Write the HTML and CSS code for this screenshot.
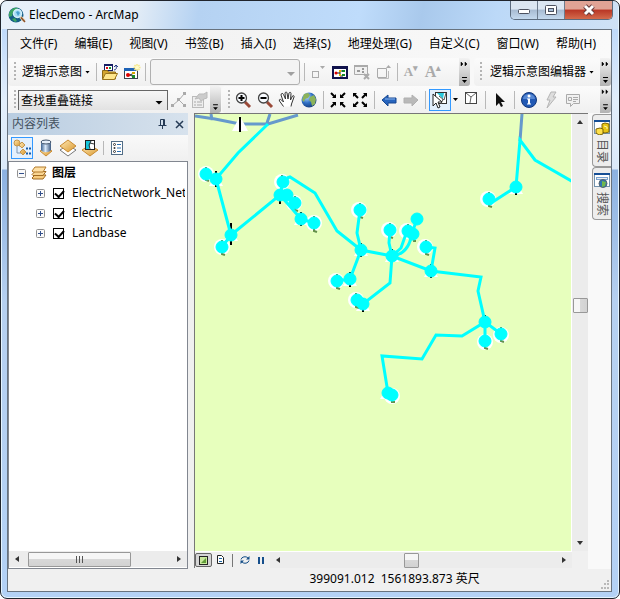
FILE: index.html
```html
<!DOCTYPE html>
<html lang="zh-CN">
<head>
<meta charset="utf-8">
<title>ElecDemo - ArcMap</title>
<link rel="stylesheet" href="styles.css">
</head>
<body>
<svg class="defs" aria-hidden="true">
  <defs>
    <linearGradient id="gold" x1="0" y1="0" x2="1" y2="1"><stop offset="0" stop-color="#ffe9b5"/><stop offset="1" stop-color="#d9982f"/></linearGradient>
    <linearGradient id="steel" x1="0" x2="1"><stop offset="0" stop-color="#3c6290"/><stop offset=".45" stop-color="#d8e8fa"/><stop offset="1" stop-color="#3c5980"/></linearGradient>
    <radialGradient id="ball" cx=".35" cy=".3" r=".8"><stop offset="0" stop-color="#b8dcff"/><stop offset=".5" stop-color="#2f6fc4"/><stop offset="1" stop-color="#123574"/></radialGradient>
    <symbol id="expand" viewBox="0 0 9 9"><rect x=".5" y=".5" width="8" height="8" rx="1" fill="#fafafa" stroke="#919191"/><path d="M2 4.500h5M4.500 2v5" stroke="#33508c"/></symbol>
    <symbol id="overflow" viewBox="0 0 10 28"><path d="M2 4l2 2-2 2zM6 4l2 2-2 2z" fill="#000" stroke="#000" stroke-width=".5"/><path d="M3 19h5v1H3zM3 22h5L5.500 25z" fill="#000"/></symbol>
  </defs>
</svg>
<div class="window">
  <header class="titlebar">
    <svg class="logo" viewBox="0 0 18 18"><circle cx="8" cy="9" r="7.500" fill="#155f86"/><path d="M1 7c2-4 5-6 9-5l-2 3-3 1-1 4-3 1zM4 13l3-1 2 3-2 1z" fill="#3ba563"/><circle cx="9.500" cy="7.500" r="4" fill="#a5ddf6" stroke="#d5effa" stroke-width="1.500"/><path d="M8 6l2-1 2 2-2 3z" fill="#4aa0d0"/><path d="M12.500 11l4 4" stroke="#e9d5b3" stroke-width="3"/><path d="M13 11.500l4 4.500" stroke="#8b4f26" stroke-width="1.500"/></svg>
    <h1>ElecDemo - ArcMap</h1>
    <div class="caption">
      <button class="min" aria-label="最小化"><svg width="14" height="12"><rect x="1.500" y="5.500" width="11" height="4" rx="1" fill="#fff" stroke="#4d5260"/></svg></button>
      <button class="max" aria-label="最大化"><svg width="14" height="12"><rect x="1.500" y="1.500" width="11" height="9" rx="1" fill="#fff" stroke="#4d5260"/><rect x="4.500" y="4.500" width="5" height="3" fill="#a8bfd8" stroke="#4d5260"/></svg></button>
      <button class="close" aria-label="关闭"><svg width="14" height="12"><path d="M3 2l8 8M11 2l-8 8" stroke="#643a3a" stroke-width="5"/><path d="M3 2l8 8M11 2l-8 8" stroke="#fff" stroke-width="3"/></svg></button>
    </div>
  </header>
  <main class="client">
    <nav class="menu">
      <button>文件(F)</button><button>编辑(E)</button><button>视图(V)</button><button>书签(B)</button><button>插入(I)</button><button>选择(S)</button><button>地理处理(G)</button><button>自定义(C)</button><button>窗口(W)</button><button>帮助(H)</button>
    </nav>

    <div class="bars">
      <div class="bar bar-schematic">
        <i class="grip"></i>
        <button class="label">逻辑示意图<i class="caret"></i></button>
        <i class="sep"></i>
        <button class="tool" aria-label="打开示意图"><svg viewBox="0 0 18 18"><rect x="3.500" y="1.500" width="8" height="6" fill="#fff" stroke="#161e63"/><path d="M3 1h9v2H3z" fill="#161e63"/><path d="M5 4h2v2H5z" fill="#e01010"/><path d="M8 4h2v2H8z" fill="#169a30"/><path d="M13 7c2 0 3-2 2-4M13 4l2-2 2 2" stroke="#263c86" fill="none"/><path d="M1.500 16V7.500h5l1 1.500h7v7z" fill="#d4a52e" stroke="#8d6a15"/><path d="M1.500 16.500l3-6h12l-3 6z" fill="#ffe68b" stroke="#9a751c"/></svg></button>
        <button class="tool" aria-label="新建示意图"><svg viewBox="0 0 18 18"><rect x="1.500" y="5.500" width="13" height="10" fill="#fff" stroke="#39434f"/><path d="M1 5h14v3H1z" fill="#1d62b7"/><path d="M4 12h3l4-2M7 12l4 2" stroke="#222" fill="none"/><circle cx="5" cy="12" r="2" fill="#d00"/><rect x="9" y="9" width="3" height="2" fill="#d4a600"/><rect x="9" y="12" width="3" height="3" fill="#188a28"/><path d="M14 1v7M10.500 4.500h7M11.500 2l5 5M16.500 2l-5 5" stroke="#f6e88a" stroke-width="1.500"/><circle cx="14" cy="4.500" r="2" fill="#fffbc8"/></svg></button>
        <i class="sep"></i>
        <span class="combo combo-empty"><select aria-label="示意图" disabled><option></option></select><i class="caret"></i></span>
        <i class="sep"></i>
        <button class="tool" aria-label="缩小节点"><svg viewBox="0 0 18 18"><rect x="3.500" y="8.500" width="6" height="6" fill="none" stroke="#aaa"/><path d="M11 3h5l-2.500 3z" fill="#aaa"/></svg></button>
        <button class="tool" aria-label="示意图窗口"><svg viewBox="0 0 18 18"><rect x="2" y="4" width="14" height="11" fill="#fff" stroke="#10124c" stroke-width="2"/><path d="M1 3h16v3H1z" fill="#10124c"/><path d="M6 10h3M9 8v5h3M9 8h3" stroke="#222" fill="none"/><circle cx="5" cy="10" r="1.500" fill="#d00"/><path d="M8 7h2v2H8zM8 11h2v2H8z" fill="#dfb600"/><path d="M11 7h3v2h-3zM11 11h3v2h-3z" fill="#118a27"/></svg></button>
        <button class="tool" aria-label="删除示意图"><svg viewBox="0 0 18 18"><path d="M1.500 2.500h13v9h-13z" fill="#f0f0f0" stroke="#aaa"/><path d="M1 2h14v2H1z" fill="#aaa"/><path d="M4 7h3v2H4zM9 5h2v2H9zM9 8h2v2H9z" fill="#999"/><path d="M11 11l5 5M16 11l-5 5" stroke="#aaa" stroke-width="2"/></svg></button>
        <button class="tool" aria-label="放大节点"><svg viewBox="0 0 18 18"><path d="M2.500 5.500h9v9h-9z" fill="none" stroke="#aaa"/><path d="M11 5h5l-2.500-3z" fill="#aaa"/><path d="M3 15.500h10.500V8" fill="none" stroke="#bbb"/></svg></button>
        <i class="sep"></i>
        <button class="tool letter small" aria-label="减小字号">A<sup>▾</sup></button>
        <button class="tool letter" aria-label="增大字号">A<sup>▴</sup></button>
        <button class="more" aria-label="工具栏选项"><svg><use href="#overflow"/></svg></button>
      </div>
      <div class="bar bar-editor">
        <i class="grip"></i>
        <button class="label">逻辑示意图编辑器<i class="caret"></i></button>
        <button class="more" aria-label="工具栏选项"><svg><use href="#overflow"/></svg></button>
      </div>
    </div>

    <div class="bars bars-tools">
      <div class="bar bar-links">
        <i class="grip"></i>
        <span class="combo combo-links"><select aria-label="算法"><option>查找重叠链接</option></select><i class="caret"></i></span>
        <button class="tool" aria-label="编辑链接"><svg viewBox="0 0 18 18"><path d="M3 14l6-5 5-6M9 9l5 5" fill="none" stroke="#aaa"/><path d="M1 13h3v3H1zM7 7h3v3H7zM13 1h3v3h-3zM13 13h3v3h-3z" fill="#aaa"/></svg></button>
        <button class="tool" aria-label="属性"><svg viewBox="0 0 18 18"><rect x="2.500" y="5.500" width="11" height="11" fill="#eee" stroke="#bbb"/><path d="M4 11h2M7 11h5M4 14h2M7 14h5" stroke="#aaa"/><path d="M5 8l4-5h5l3-2v6l-3 1-3 2-2-3z" fill="#ccc" stroke="#bbb"/></svg></button>
        <button class="more" aria-label="工具栏选项"><svg viewBox="0 0 10 28"><path d="M3 19h5v1H3zM3 22h5L5.500 25z"/></svg></button>
      </div>
      <div class="bar bar-map">
        <i class="grip"></i>
        <button class="tool" aria-label="放大"><svg viewBox="0 0 18 18"><path d="M11 11l5 5" stroke="#9a4938" stroke-width="3"/><circle cx="7.500" cy="7" r="5" fill="#f8fbff" stroke="#444" stroke-width="1.300"/><path d="M4.500 7h6M7.500 4v6" stroke="#000" stroke-width="2"/></svg></button>
        <button class="tool" aria-label="缩小"><svg viewBox="0 0 18 18"><path d="M11 11l5 5" stroke="#9a4938" stroke-width="3"/><circle cx="7.500" cy="7" r="5" fill="#f8fbff" stroke="#444" stroke-width="1.300"/><path d="M4.500 7h6" stroke="#000" stroke-width="2"/></svg></button>
        <button class="tool" aria-label="平移"><svg viewBox="0 0 18 18"><path d="M5.500 15.500L1.500 10c-1-2 1-2 2-1l2 2L3 4c0-2 2-2 2.500-.5L7.500 8l-.5-6c.5-1.500 2-1 2 0l1 6 1-6c.5-1 2-1 2 .5L12.500 9l2-4c1-1 2 0 1.500 1l-2.500 7-.5 2.500" fill="#fff" stroke="#333"/></svg></button>
        <button class="tool" aria-label="全图"><svg viewBox="0 0 18 18"><circle cx="9" cy="9" r="7.500" fill="url(#ball)"/><path d="M4 3l4-1 2 2-2 3-3 1-1 3-2-2zM10 6l4-2 2 4-1 5-3 2-1-4-2-2z" fill="#8cb35a"/></svg></button>
        <i class="sep"></i>
        <button class="tool" aria-label="固定比例放大"><svg viewBox="0 0 18 18"><path d="M2 2l4 4M16 2l-4 4M2 16l4-4M16 16l-4-4" stroke="#000" stroke-width="2"/><path d="M7 3v4H3zM11 3v4h4zM7 15v-4H3zM11 15v-4h4z"/></svg></button>
        <button class="tool" aria-label="固定比例缩小"><svg viewBox="0 0 18 18"><path d="M3 3l4 4M15 3l-4 4M3 15l4-4M15 15l-4-4" stroke="#000" stroke-width="2"/><path d="M2 6V2h4zM16 6V2h-4zM2 12v4h4zM16 12v4h-4z"/></svg></button>
        <i class="sep"></i>
        <button class="tool" aria-label="上一视图"><svg viewBox="0 0 18 18"><path d="M2 9l6-5v3h8v5H8v3z" fill="#2765be" stroke="#164790"/><path d="M5 8h10" stroke="#8eb8ed"/></svg></button>
        <button class="tool" aria-label="下一视图"><svg viewBox="0 0 18 18"><path d="M16 9l-6-5v3H2v5h8v3z" fill="#b9b9b9" stroke="#b0b0b0"/></svg></button>
        <i class="sep"></i>
        <button class="tool active" aria-label="选择要素"><svg viewBox="0 0 18 18"><rect x="4.500" y="1.500" width="11" height="11" fill="#fff" stroke="#333"/><path d="M6 2h7l-1 6z" fill="#29c7dc"/><path d="M8 5l5 4 2-7M12 8l-2 5" fill="none" stroke="#555"/><path d="M2 3v12l3-3 2 5 2-1-2-5h4z" fill="#fff" stroke="#222"/></svg></button>
        <i class="caret"></i>
        <button class="tool" aria-label="清除选择"><svg viewBox="0 0 18 18"><rect x="3.500" y="1.500" width="11" height="11" fill="#fff" stroke="#444"/><path d="M4 2l5 4 5-4M9 6l-1 6" fill="none" stroke="#666"/></svg></button>
        <i class="sep"></i>
        <button class="tool" aria-label="选择元素"><svg viewBox="0 0 18 18"><path d="M5 2v13l3-3 2 4 2-1-2-4h4z" fill="#111"/></svg></button>
        <i class="sep"></i>
        <button class="tool" aria-label="识别"><svg viewBox="0 0 18 18"><circle cx="9" cy="9" r="7.500" fill="#2259b4" stroke="#13377a"/><path d="M3 8a6 5 0 0 1 12 0z" fill="#6c9be0" opacity=".7"/><circle cx="9" cy="5" r="1.500" fill="#fff"/><path d="M7 7.500h3v5h1v1H7v-1h1v-4H7z" fill="#fff"/></svg></button>
        <button class="tool" aria-label="超链接"><svg viewBox="0 0 18 18"><path d="M9 1h5l-3 5h3l-9 11 3-8H5z" fill="#ddd" stroke="#b5b5b5"/></svg></button>
        <button class="tool" aria-label="HTML 弹出窗口"><svg viewBox="0 0 18 18"><path d="M2.500 3.500h13v9h-6l-3 3v-3h-4z" fill="#f1f1f1" stroke="#aaa"/><path d="M4.500 6.500h3v3h-3zM9 6.500h5M9 8.500h5M9 10.500h3" fill="none" stroke="#aaa"/></svg></button>
        <button class="more" aria-label="工具栏选项"><svg><use href="#overflow"/></svg></button>
      </div>
    </div>

    <div class="workspace">
      <aside class="toc">
        <div class="toc-head"><h2>内容列表</h2>
          <button aria-label="自动隐藏"><svg width="9" height="10"><path d="M2.500 6V.5h4V6M5.500 1v5M.5 6.500h8M4.500 7v3" fill="none" stroke="#263b56"/></svg></button>
          <button aria-label="关闭"><svg width="9" height="9"><path d="M1 1l7 7M8 1L1 8" stroke="#263b56" stroke-width="1.500"/></svg></button>
        </div>
        <div class="toc-tools">
          <button class="tool active" aria-label="按绘制顺序列出"><svg viewBox="0 0 18 18"><path d="M4 7v7h4M6 7h2" fill="none" stroke="#7c96b3"/><circle cx="4" cy="4" r="3" fill="url(#gold)" stroke="#c5964b"/><path d="M9 3l3 3-3 3-3-3zM10 10l3 3-3 3-3-3z" fill="url(#gold)" stroke="#c5964b"/><path d="M13 9.500h2M16 9.500h2M13 14.500h2M16 14.500h2" stroke="#185ca8" stroke-width="2"/></svg></button>
          <button class="tool" aria-label="按源列出"><svg viewBox="0 0 18 18"><path d="M3 12l6-3 6 3-6 5z" fill="url(#gold)" stroke="#c98b32"/><path d="M4 3v8c2 3 8 3 10 0V3z" fill="url(#steel)"/><ellipse cx="9" cy="3" rx="5" ry="2" fill="#e6effa" stroke="#40536b"/></svg></button>
          <button class="tool" aria-label="按可见性列出"><svg viewBox="0 0 18 18"><path d="M1 11l8-5 8 5-8 6z" fill="#fff" stroke="#777"/><path d="M1 7l8-6 8 6-8 6z" fill="url(#gold)" stroke="#c98b32"/></svg></button>
          <button class="tool" aria-label="按选择列出"><svg viewBox="0 0 18 18"><path d="M1 11l8-5 8 5-8 6z" fill="url(#gold)" stroke="#c98b32"/><rect x="4.500" y="1.500" width="9" height="9" fill="#fff" stroke="#222"/><path d="M5 2h5L8 10H5z" fill="#16c6dc"/><path d="M10 2L8 6l1 4M9 4l4 1" fill="none" stroke="#333"/></svg></button>
          <i class="sep"></i>
          <button class="tool" aria-label="选项"><svg viewBox="0 0 18 18"><rect x="3.500" y="2.500" width="11" height="13" fill="#fff" stroke="#526d86"/><circle cx="6.500" cy="5.500" r="1" fill="none" stroke="#333"/><circle cx="6.500" cy="9" r="1" fill="#333"/><circle cx="6.500" cy="12.500" r="1" fill="none" stroke="#333"/><path d="M9 5.500h4M9 9h4M9 12.500h4" stroke="#2c6faf"/></svg></button>
        </div>
        <div class="tree">
          <ul>
            <li class="root"><svg class="box" viewBox="0 0 9 9"><rect x=".5" y=".5" width="8" height="8" rx="1" fill="#fafafa" stroke="#919191"/><path d="M2 4.500h5" stroke="#33508c"/></svg><svg class="layers" viewBox="0 0 16 14"><path d="M1 12l3-3h11l-3 4H2z" fill="#f7cb7d" stroke="#a06a20"/><path d="M1 8.500l3-3h11l-3 4H2z" fill="#f9d591" stroke="#a06a20"/><path d="M1 5l3-4h11l-3 5H2z" fill="#ffe0a4" stroke="#b27a2c"/></svg><strong>图层</strong></li>
            <li><svg class="box"><use href="#expand"/></svg><input type="checkbox" id="l1" checked><label for="l1">ElectricNetwork_Net</label></li>
            <li><svg class="box"><use href="#expand"/></svg><input type="checkbox" id="l2" checked><label for="l2">Electric</label></li>
            <li><svg class="box"><use href="#expand"/></svg><input type="checkbox" id="l3" checked><label for="l3">Landbase</label></li>
          </ul>
          <div class="scroll-h"><button class="arrow left" aria-label="向左"></button><span class="thumb toc-thumb"><i></i><i></i><i></i></span><button class="arrow right" aria-label="向右"></button></div>
        </div>
      </aside>

      <section class="view">
        <div class="map">
          <svg role="img" aria-label="电力网络地图">
            <g transform="translate(-195 -114)">
              <g class="river"><path d="M195 116l20 3 25 5h28l30-9M267 123l3-9M211 114l1 6M522 114l-2 27"/></g>
              <g class="halo">
                <circle cx="206" cy="174" r="8"/><circle cx="222" cy="247" r="8"/><circle cx="282" cy="182" r="8"/><circle cx="294" cy="203" r="8"/><circle cx="314" cy="223" r="8"/><circle cx="359" cy="210" r="8"/><circle cx="336" cy="281" r="8"/><circle cx="356" cy="300" r="8"/><circle cx="389" cy="230" r="8"/><circle cx="407" cy="231" r="8"/><circle cx="425" cy="247" r="8"/><circle cx="485" cy="342" r="8"/><circle cx="501" cy="335" r="8"/><circle cx="392" cy="396" r="8"/><circle cx="488" cy="199" r="8"/>
                <path d="M240 116l8 15h-16zM216 174l7 12h-14zM231 228l7 13h-14zM301 212l7 13h-14zM361 243l7 13h-14zM350 273l7 13h-14zM363 298l7 13h-14zM392 249l7 13h-14zM431 264l7 13h-14zM516 181l7 13h-14zM387 387l7 12h-14z"/>
              </g>
              <path class="mast" d="M240 117v15M216 171v16M231 223v22M280 190v14M301 212v14M361 243v14M350 272v15M363 298v14M392 249v14M431 264v14M485 315v14M516 180v15"/>
              <g class="leaf"><path d="M206 167v13l3 1M222 240v14l3 1M282 175v8M295 196v14l3 1M314 216v15l3 1M360 203v14l3 1M337 274v14l3 1M356 293v14l3 1M390 223v14l3 1M408 224v10M412 233l2 8h2M426 240v14l3 1M485 334v14l3 1M501 327v14l3 1M391 388l1 14h3M489 192v14l3 1"/></g>
              <path class="wire" d="M206 174l10 5 22-26 30-29M216 179l15 56-9 12M231 235l49-40 3-13M287 178l3-1 25 16 22 38 24 19 31 6 39 15 50 6-3 14 7 31 16 12M280 195l21 24 13 4M360 210l-3 23 4 17-11 29-13 2M390 230l-1 13 3 13-2 27-27 21-6-4M392 256l9-8 6-17M392 256q17-2 20-23l5-14M426 247l9 1-4 23M485 341v-19l-23 14-26-1-14 24-40-3 6 37 5 2M489 199l2 4 25-16 4-47 15 20 38 22"/>
              <g class="node">
                <circle cx="206" cy="174" r="6"/><circle cx="216" cy="179" r="6"/><circle cx="231" cy="235" r="6"/><circle cx="222" cy="247" r="6"/><circle cx="283" cy="182" r="6"/><circle cx="280" cy="195" r="6"/><circle cx="287" cy="195" r="6"/><circle cx="295" cy="203" r="6"/><circle cx="301" cy="219" r="6"/><circle cx="314" cy="223" r="6"/><circle cx="360" cy="210" r="6"/><circle cx="361" cy="250" r="6"/><circle cx="350" cy="279" r="6"/><circle cx="337" cy="281" r="6"/><circle cx="357" cy="300" r="6"/><circle cx="363" cy="304" r="6"/><circle cx="390" cy="230" r="6"/><circle cx="408" cy="231" r="6"/><circle cx="413" cy="234" r="6"/><circle cx="417" cy="219" r="6"/><circle cx="426" cy="247" r="6"/><circle cx="392" cy="256" r="6"/><circle cx="431" cy="271" r="6"/><circle cx="485" cy="322" r="6"/><circle cx="485" cy="341" r="6"/><circle cx="501" cy="334" r="6"/><circle cx="388" cy="393" r="6"/><circle cx="392" cy="395" r="6"/><circle cx="489" cy="199" r="6"/><circle cx="516" cy="187" r="6"/>
              </g>
            </g>
          </svg>
        </div>
        <div class="scroll-v"><button class="arrow up" aria-label="向上"></button><span class="thumb map-thumb-v"></span><button class="arrow down" aria-label="向下"></button></div>
        <div class="view-foot">
          <button class="pressed" aria-label="数据视图"><svg width="9" height="9"><rect x=".5" y=".5" width="8" height="8" fill="#c9e89c" stroke="#222"/><path d="M2 7l5-5v5z" fill="#609d38"/></svg></button>
          <button aria-label="布局视图"><svg width="9" height="10"><path d="M1.500.5h4l2 2v6h-6z" fill="#fff" stroke="#222"/><path d="M3 3.500h3M3 6.500h3" stroke="#1966a7"/></svg></button>
          <i class="sep"></i>
          <button aria-label="刷新"><svg width="10" height="10"><path d="M1 4.500a4 3.500 0 0 1 7-1.500M9 5.500A4 3.500 0 0 1 2 7" fill="none" stroke="#124d87"/><path d="M9.500 1v3.500H6zM.5 9V5.500H4z" fill="#124d87"/></svg></button>
          <button aria-label="暂停绘制"><svg width="7" height="7"><path d="M0 0h2v7H0zM4 0h2v7H4z" fill="#164f8c"/></svg></button>
          <div class="scroll-h"><button class="arrow left" aria-label="向左"></button><span class="thumb map-thumb-h"></span><button class="arrow right" aria-label="向右"></button></div>
        </div>
      </section>

      <nav class="dock">
        <button><svg viewBox="0 0 16 16"><rect x=".5" y="1.500" width="15" height="13" fill="#fff" stroke="#7393ad"/><path d="M0 1h16v2H0z" fill="#164f96"/><path d="M8 5l3-1 4 1v8l-4 1-3-1z" fill="#e7c515" stroke="#7d6505"/><path d="M2 10l4-1 3 1v5l-4 1-3-2z" fill="#ffe04a" stroke="#7d6505"/><path d="M10 7l3 1v2" fill="none" stroke="#fff7a6"/></svg><span>目录</span></button>
        <button><svg viewBox="0 0 16 16"><rect x=".5" y="1.500" width="15" height="13" fill="#fff" stroke="#7393ad"/><path d="M0 1h16v2H0z" fill="#164f96"/><rect x="2.500" y="5.500" width="11" height="2" fill="#eee" stroke="#7ba3d0"/><circle cx="9" cy="11.500" r="4" fill="#2d73b3" stroke="#55636e"/><path d="M8 9l4 1-1 4-3 1z" fill="#71b84c"/></svg><span>搜索</span></button>
      </nav>
    </div>

    <footer class="status"><output>399091.012&nbsp; 1561893.873 英尺</output><svg class="resize" width="9" height="9"><path d="M7 0h2v2H7zM4 3h2v2H4zM7 3h2v2H7zM1 7h2v2H1zM4 7h2v2H4zM7 7h2v2H7z" fill="#b8b8b8"/></svg></footer>
  </main>
</div>
</body>
</html>
```

FILE: styles.css
```css
* { box-sizing: border-box; }
html, body { height: 100%; }
body { margin: 0; background: #fff; color: #000; font: 12px/20px "Noto Sans", "Noto Sans CJK SC", sans-serif; }
button, select, input { margin: 0; padding: 0; border: 0; background: none; color: inherit; font: inherit; }
svg { display: block; flex: none; }
h1, h2, ul { margin: 0; padding: 0; font: inherit; list-style: none; }
.defs { position: absolute; width: 0; height: 0; }

.window {
  height: 100vh; display: flex; flex-direction: column; padding: 0 7px 6px 6px;
  border: 1px solid #20242c; border-radius: 7px; box-shadow: inset 0 0 0 1px #e4f4ff;
  background: linear-gradient(#d3e4f7 0, #c0dafa 30px, #e2eefb 100px, #dbe9f9 168px, #8cb1e0 169px, #b6d0f0 300px, #b3d1f5);
}
.titlebar { flex: none; height: 28px; display: flex; align-items: center; gap: 3px; margin: 0 -6px 0 -5px; padding-left: 6px; border-radius: 6px 6px 0 0; background: linear-gradient(100deg, #e8f1fa 0, #e2ecf6 22%, #b5d2f2 32%, #bfdcfb 58%, #a9c9ec 68%, #bcd9f8 80%, #cfe1f5); }
.logo { width: 18px; height: 18px; }
.titlebar h1 { flex: 1; }
.caption { display: flex; align-self: flex-start; margin-right: 5px; border: 1px solid #5b6b7e; border-top: 0; border-radius: 0 0 5px 5px; overflow: hidden; }
.caption button { height: 18px; width: 27px; display: grid; place-items: center; border-right: 1px solid #6c7b8d; background: linear-gradient(#dbe6f2 45%, #a7bbd2 50%, #c4d9ee); }
.caption .close { width: 47px; border-right: 0; background: linear-gradient(#e0a395 45%, #b93625 50%, #d46b4c); }

.client { flex: 1; min-height: 0; display: flex; flex-direction: column; border: 1px solid #67727e; background: #f0f0f0; overflow: hidden; }
.menu { flex: none; height: 28px; display: flex; align-items: center; gap: 17px; padding-left: 12px; white-space: nowrap; background: linear-gradient(90deg, #f0f0f0, #fafafa); }
.bars { flex: none; height: 28px; display: flex; gap: 4px; background: #f8f8f8; }
.bars-tools { height: 27px; gap: 1px; }
.bar { display: flex; align-items: center; gap: 4px; padding-left: 6px; border-radius: 4px; background: linear-gradient(#fbfbfb, #f0f0f0); }
.bar-schematic, .bar-map { flex: 1; }
.grip { flex: none; width: 2px; height: 20px; background: repeating-linear-gradient(#b4b4b4 0 2px, transparent 2px 4px); }
.sep { flex: none; width: 1px; height: 18px; background: #b8b8b8; }
.caret { flex: none; width: 5px; height: 3px; background: #000; clip-path: polygon(0 0, 100% 0, 50% 100%); }
.label { display: flex; align-items: center; gap: 3px; margin: 0 2px; white-space: nowrap; }
.bar-editor .label { margin-left: 4px; }
.tool { flex: none; width: 18px; height: 22px; display: grid; place-items: center; }
.tool svg { width: 18px; height: 18px; }
.tool.active { width: 22px; border: 1px solid #3399ff; background: #e4f0fd; }
.letter { display: block; font: bold 16px/20px "Liberation Serif", serif; color: #aaa; white-space: nowrap; }
.letter.small { font-size: 13px; }
.letter sup { font-size: 9px; line-height: 8px; }
.more { flex: none; align-self: stretch; width: 11px; margin-left: auto; border-radius: 0 3px 3px 0; background: linear-gradient(#f3f3f3, #b2b2b2); }
.more svg { width: 10px; height: 28px; }
.bars-tools .more svg { height: 27px; }
.combo { position: relative; flex: none; }
.combo select { width: 100%; height: 100%; appearance: none; opacity: 1; }
.combo .caret { position: absolute; right: 4px; top: 50%; width: 8px; height: 4px; }
.combo-empty { width: 150px; height: 26px; border: 1px solid #b0b0b0; border-radius: 3px; background: #f3f3f3; }
.combo-empty .caret { background: #a0a0a0; }
.combo-links { width: 150px; height: 20px; align-self: flex-end; margin-bottom: 3px; border: 1px solid #666; border-bottom: 0; background: linear-gradient(#f6f6f6, #e2e2e2); }
.combo-links select { padding-left: 2px; }
.bar-links { gap: 2px; }
.bar-map .sep { margin: 0 1px; }
.bar-map .active { margin: 0 -2px; }

.workspace { flex: 1; min-height: 0; display: flex; }
.toc { flex: none; width: 180px; display: flex; flex-direction: column; margin-right: 6px; }
.toc-head { height: 22px; display: flex; align-items: center; gap: 8px; padding: 0 4px; color: #44515f; background: linear-gradient(90deg, #b9cde1, #d7e2ed); }
.toc-head h2 { flex: 1; }
.toc-tools { height: 26px; display: flex; align-items: center; gap: 4px; padding-left: 3px; background: linear-gradient(#f9f9f9, #f0f0f0); }
.toc-tools .sep { height: 14px; }
.tree { flex: 1; min-height: 0; display: flex; flex-direction: column; border: 1px solid #828790; background: #fff; }
.tree ul { flex: 1; padding: 1px 2px 0 8px; overflow: hidden; }
.tree li { height: 20px; display: flex; align-items: center; gap: 8px; padding-left: 19px; white-space: nowrap; overflow: hidden; }
.tree .root { gap: 5px; padding-left: 0; }
.box { width: 9px; height: 9px; }
.layers { width: 16px; height: 14px; }
.tree input { flex: none; width: 11px; height: 11px; appearance: none; border: 1px solid #000; background: #fff; }
.tree input:checked::after { content: ""; display: block; width: 7px; height: 4px; margin: 1px; border: solid #000; border-width: 0 0 2px 2px; transform: rotate(-48deg); }
.tree strong { font-weight: 700; }

.arrow { flex: none; width: 16px; height: 16px; display: grid; place-items: center; }
.arrow::before { content: ""; width: 6px; height: 6px; background: #333; }
.left::before { width: 4px; clip-path: polygon(100% 0, 100% 100%, 0 50%); }
.right::before { width: 4px; clip-path: polygon(0 0, 100% 50%, 0 100%); }
.up::before { height: 4px; clip-path: polygon(50% 0, 100% 100%, 0 100%); }
.down::before { height: 4px; clip-path: polygon(0 0, 100% 0, 50% 100%); }
.scroll-h { flex: none; height: 16px; display: flex; align-items: center; background: #ececec; }
.scroll-h .right { margin-left: auto; }
.thumb { flex: none; display: flex; align-items: center; justify-content: center; gap: 2px; border: 1px solid #989898; border-radius: 1px; background: linear-gradient(#f6f6f6 45%, #d8d8d8 50%, #d2d2d2); }
.toc-thumb { width: 58%; height: 15px; margin-left: 3px; }
.toc-thumb i { width: 1px; height: 7px; background: #555; }
.tree .scroll-h { margin-bottom: 1px; }

.view { flex: 1; min-width: 0; display: grid; grid-template: minmax(0, 1fr) 17px / minmax(0, 1fr) 16px; margin-bottom: 1px; border: solid #777; border-width: 1px 0 0 1px; }
.map { overflow: hidden; border-right: 1px solid #fff; background: #e7ffbd; }
.map svg { width: 100%; height: 100%; }
.scroll-v { display: flex; flex-direction: column; align-items: center; background: #ececec; }
.scroll-v .down { margin-top: auto; }
.map-thumb-v { width: 15px; height: 15px; margin-top: 168px; background: linear-gradient(90deg, #f6f6f6 45%, #d8d8d8 50%, #d2d2d2); }
.view-foot { display: flex; align-items: center; border-top: 1px solid #fff; }
.view-foot > button { width: 17px; height: 14px; display: grid; place-items: center; }
.view-foot > .pressed { border: 1px solid #666; border-radius: 2px; background: #d5d5d5; }
.view-foot .sep { height: 13px; margin: 0 3px; background: #777; }
.view-foot .scroll-h { flex: 1; }
.map-thumb-h { width: 15px; height: 15px; margin-left: 39%; }
.river path { fill: none; stroke: #6699cc; stroke-width: 3; }
.halo { fill: #fff; }
.mast { stroke: #000; stroke-width: 2; }
.leaf path { fill: none; stroke: #63904a; stroke-width: 2; }
.wire { fill: none; stroke: #00ffff; stroke-width: 3; }
.node { fill: #00ffff; stroke: #00ffff; stroke-width: 1; }

.dock { flex: none; width: 23px; padding: 1px 0 0 4px; background: #f9f9f9; }
.dock button { width: 100%; height: 53px; display: flex; flex-direction: column; align-items: center; gap: 4px; padding-top: 4px; border: 1px solid #999; border-right: 0; border-radius: 4px 0 0 4px; background: #ededed; color: #555; }
.dock svg { width: 16px; height: 16px; }
.dock span { writing-mode: vertical-rl; text-orientation: sideways; line-height: 16px; }

.status { flex: none; height: 22px; display: flex; justify-content: space-between; padding-left: 50%; background: #f0f0f0; }
.status output { white-space: nowrap; }
.resize { align-self: flex-end; margin: 0 2px 2px 0; }
```
